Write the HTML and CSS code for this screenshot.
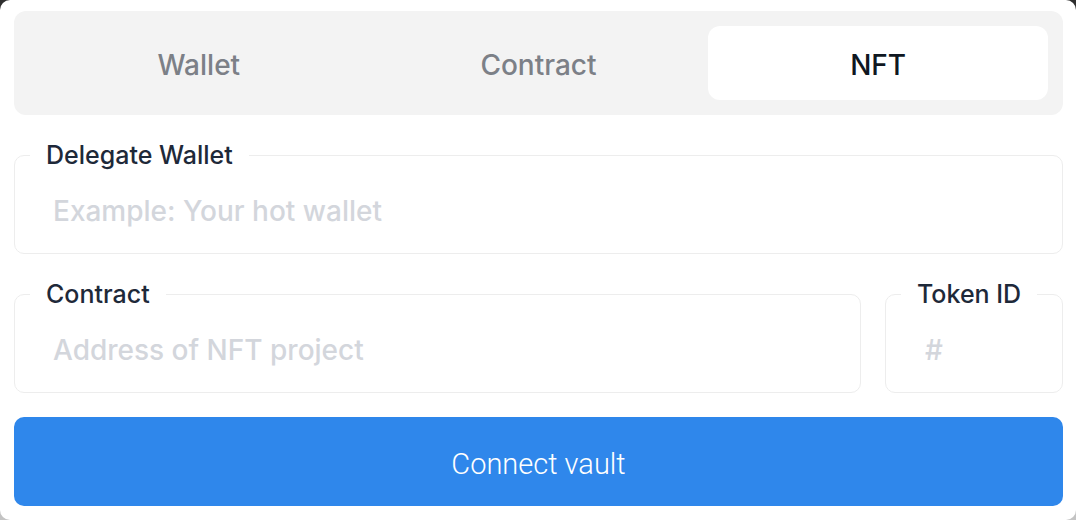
FILE: index.html
```html
<!DOCTYPE html>
<html lang="en">
<head>
<meta charset="utf-8">
<title>Delegate</title>
<link rel="stylesheet" href="styles.css">
</head>
<body>
<div class="card">
  <div class="tabs">
    <button class="tab">Wallet</button>
    <button class="tab">Contract</button>
    <button class="tab active">NFT</button>
  </div>
  <fieldset class="field field-first">
    <legend>Delegate Wallet</legend>
    <input type="text" placeholder="Example: Your hot wallet">
  </fieldset>
  <div class="row">
    <fieldset class="field grow">
      <legend>Contract</legend>
      <input type="text" placeholder="Address of NFT project">
    </fieldset>
    <fieldset class="field token">
      <legend>Token ID</legend>
      <input type="text" placeholder="#">
    </fieldset>
  </div>
  <button class="connect">Connect vault</button>
</div>
</body>
</html>
```

FILE: styles.css
```css
* { box-sizing: border-box; }
html, body { margin: 0; height: 100%; }
body {
  background: linear-gradient(#2e2e2e, #c4c4c4);
  font-family: Inter, "Noto Sans", sans-serif;
}
.card {
  width: 1076px;
  height: 520px;
  background: #ffffff;
  border-radius: 10px;
  padding: 11px 13px 14px 14px;
  display: flex;
  flex-direction: column;
}
.tabs {
  height: 104px;
  background: #f3f3f3;
  border-radius: 12px;
  padding: 15px;
  display: grid;
  grid-template-columns: 1fr 1fr 1fr;
}
.tab {
  border: none;
  background: transparent;
  font-family: inherit;
  font-size: 28px;
  font-weight: 500;
  color: #7c8087;
  border-radius: 12px;
  padding: 3px 0 0 0;
}
.tab.active {
  background: #ffffff;
  color: #0f1721;
}
.field {
  margin: 27px 0 0 0;
  padding: 0 15px;
  border: 1px solid #ededed;
  border-radius: 10px;
  min-width: 0;
}
.field legend {
  padding: 0 16px;
  font-size: 25px;
  font-weight: 500;
  line-height: 26px;
  color: #1e2939;
}
.field input {
  display: block;
  width: 100%;
  height: 85px;
  border: none;
  outline: none;
  padding: 0 0 0 23px;
  font-family: inherit;
  font-size: 28px;
  font-weight: 500;
  color: #1e2939;
  background: transparent;
}
.field input::placeholder { color: #d3d6dc; }
.row {
  display: flex;
  gap: 24px;
  margin-top: 27px;
}
.row .field { margin-top: 0; }
.grow { flex: 1; }
.token { width: 178px; flex: none; }
.token input { padding-left: 24px; }
.connect {
  margin-top: 24px;
  height: 89px;
  border: none;
  border-radius: 10px;
  background: #2f87eb;
  color: #ffffff;
  font-family: Roboto, "Liberation Sans", sans-serif;
  font-weight: 300;
  font-size: 29px;
  padding: 4px 0 0 0;
}
```
